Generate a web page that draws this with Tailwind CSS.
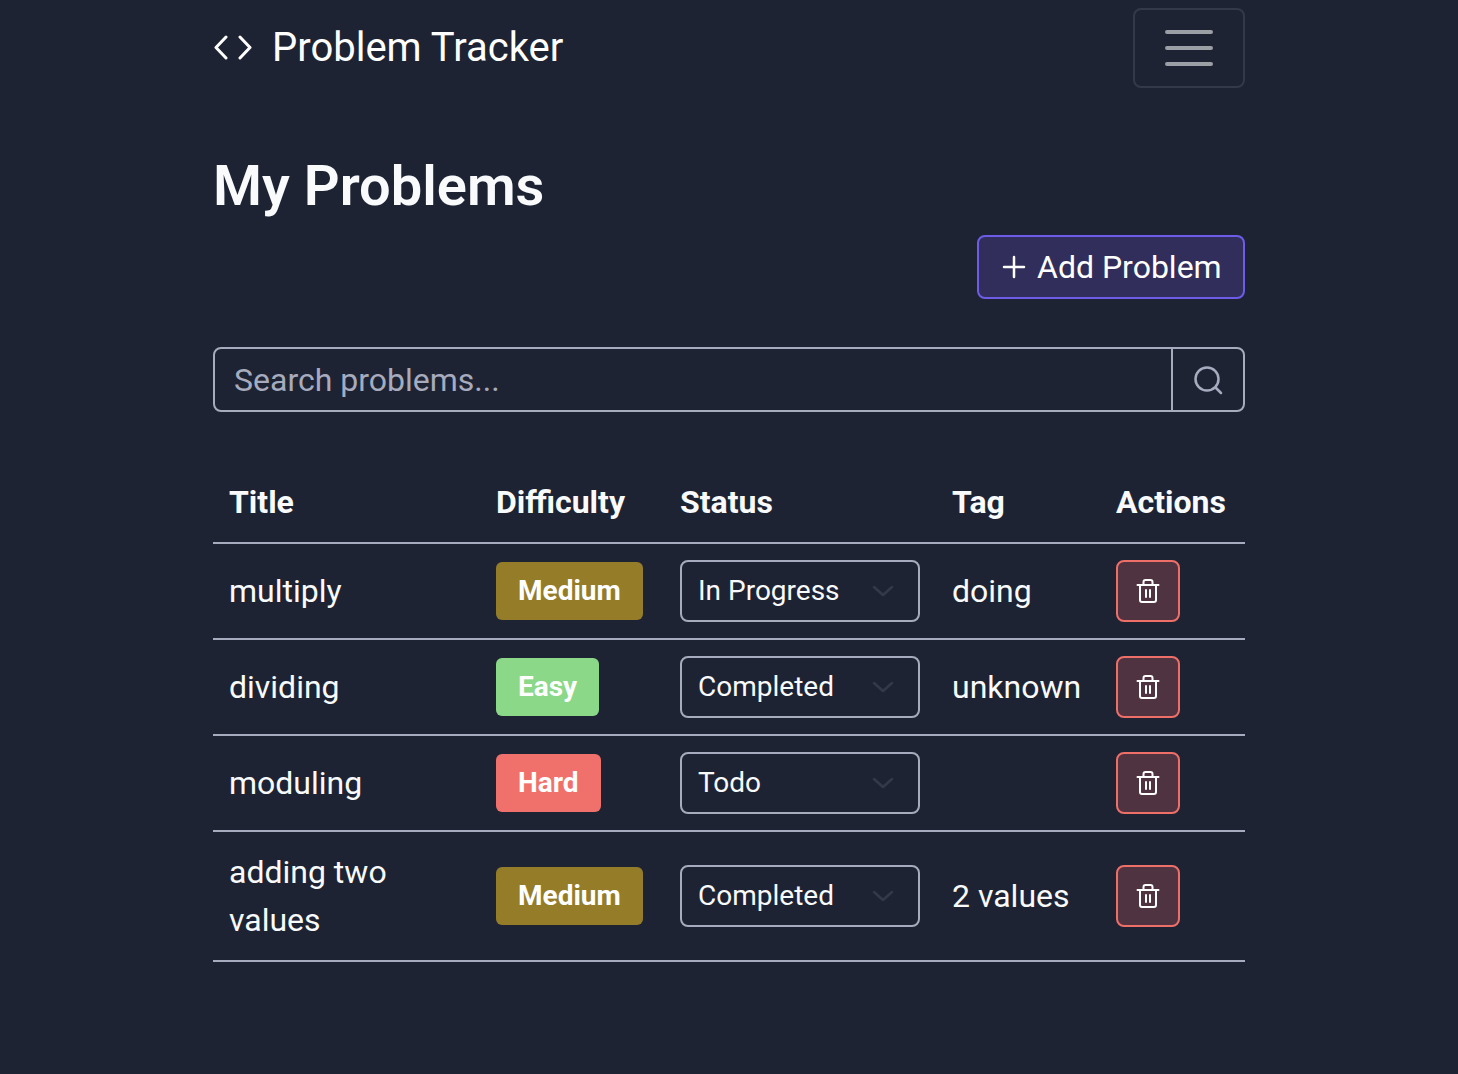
<!DOCTYPE html>
<html lang="en">
<head>
<meta charset="utf-8">
<title>Problem Tracker</title>
<script src="https://cdn.jsdelivr.net/npm/@tailwindcss/browser@4"></script>
</head>
<body class="bg-[#1e2334] text-[#f8fafc] font-['Roboto',sans-serif] min-h-[1074px]">
<div class="w-[1032px] ml-[213px]">
  <nav class="flex items-center justify-between pt-2 h-[88px]">
    <a class="flex items-center gap-[20px] text-[40px] leading-[48px] text-white">
      <svg class="w-[38px] h-[30px] ml-[1px]" viewBox="0 0 38 30" fill="none" stroke="currentColor" stroke-width="3" stroke-linecap="round" stroke-linejoin="round"><path d="M12 4 2 14.500 12 25M26 4l10 10.500L26 25"/></svg>
      <span>Problem Tracker</span>
    </a>
    <button class="w-[112px] h-[80px] border-2 border-[#343949] rounded-lg flex flex-col items-center justify-center gap-3">
      <span class="block w-12 h-1 rounded-full bg-[#9a9ea5]"></span>
      <span class="block w-12 h-1 rounded-full bg-[#9a9ea5]"></span>
      <span class="block w-12 h-1 rounded-full bg-[#9a9ea5]"></span>
    </button>
  </nav>
  <h1 class="mt-[65px] text-[56px] leading-[67px] font-semibold text-[#f8fafc]">My Problems</h1>
  <div class="flex justify-end mt-[15px]">
    <button class="h-16 w-[268px] border-2 border-[#6c5ce7] bg-[#312e5c] rounded-lg flex items-center pl-[23px] gap-[11px] text-[32px] text-white">
      <svg class="w-6 h-6" viewBox="0 0 24 24" fill="none" stroke="currentColor" stroke-width="2.500" stroke-linecap="round"><path d="M12 2v20M2 12h20"/></svg>
      <span>Add Problem</span>
    </button>
  </div>
  <div class="mt-[48px] h-[65px] flex border-2 border-[#a6abbd] rounded-lg">
    <div class="flex-1 flex items-center pl-[19px] text-[32px] text-[#a6abbd]">Search problems...</div>
    <div class="w-[72px] border-l-2 border-[#a6abbd] flex items-center justify-center text-[#a6abbd]">
      <svg class="w-[32px] h-[32px]" viewBox="0 0 32 32" fill="none" stroke="currentColor" stroke-width="2.500" stroke-linecap="round"><circle cx="15" cy="15" r="11.500"/><path d="m24 24 5 5"/></svg>
    </div>
  </div>
  <table class="mt-[50px] w-[1032px] table-fixed border-collapse text-[32px] leading-[48px]">
    <colgroup><col class="w-[267px]"><col class="w-[184px]"><col class="w-[272px]"><col class="w-[164px]"><col class="w-[145px]"></colgroup>
    <thead>
      <tr class="border-b-2 border-[#a6abbd]">
        <th class="p-4 text-left font-bold">Title</th>
        <th class="p-4 text-left font-bold">Difficulty</th>
        <th class="p-4 text-left font-bold">Status</th>
        <th class="p-4 text-left font-bold">Tag</th>
        <th class="p-4 text-left font-bold">Actions</th>
      </tr>
    </thead>
    <tbody>
      <tr class="border-b-2 border-[#a6abbd]">
        <td class="p-4">multiply</td>
        <td class="p-4"><span class="inline-flex items-center h-[58px] px-[22px] rounded-md bg-[#947c29] text-[28px] font-bold text-white">Medium</span></td>
        <td class="p-4"><div class="w-[240px] h-[62px] border-2 border-[#a6abbd] rounded-lg flex items-center justify-between pl-4 pr-[24px] text-[28px]"><span>In Progress</span><svg class="w-[22px] h-[12px]" viewBox="0 0 22 12" fill="none" stroke="#343949" stroke-width="2.500" stroke-linecap="round" stroke-linejoin="round"><path d="m2 2 9 8 9-8"/></svg></div></td>
        <td class="p-4">doing</td>
        <td class="p-4"><button class="w-16 h-[62px] border-2 border-[#ee6e68] bg-[#4f3340] rounded-lg flex items-center justify-center text-white"><svg class="w-6 h-6" viewBox="0 0 24 24" fill="none" stroke="currentColor" stroke-width="2" stroke-linecap="round" stroke-linejoin="round"><path d="M1.500 6h21M4 6v15a2 2 0 0 0 2 2h12a2 2 0 0 0 2-2V6M7.500 6V3a2 2 0 0 1 2-2h5a2 2 0 0 1 2 2v3M10 11v7M14 11v7"/></svg></button></td>
      </tr>
      <tr class="border-b-2 border-[#a6abbd]">
        <td class="p-4">dividing</td>
        <td class="p-4"><span class="inline-flex items-center h-[58px] px-[22px] rounded-md bg-[#8ad888] text-[28px] font-bold text-white">Easy</span></td>
        <td class="p-4"><div class="w-[240px] h-[62px] border-2 border-[#a6abbd] rounded-lg flex items-center justify-between pl-4 pr-[24px] text-[28px]"><span>Completed</span><svg class="w-[22px] h-[12px]" viewBox="0 0 22 12" fill="none" stroke="#343949" stroke-width="2.500" stroke-linecap="round" stroke-linejoin="round"><path d="m2 2 9 8 9-8"/></svg></div></td>
        <td class="p-4">unknown</td>
        <td class="p-4"><button class="w-16 h-[62px] border-2 border-[#ee6e68] bg-[#4f3340] rounded-lg flex items-center justify-center text-white"><svg class="w-6 h-6" viewBox="0 0 24 24" fill="none" stroke="currentColor" stroke-width="2" stroke-linecap="round" stroke-linejoin="round"><path d="M1.500 6h21M4 6v15a2 2 0 0 0 2 2h12a2 2 0 0 0 2-2V6M7.500 6V3a2 2 0 0 1 2-2h5a2 2 0 0 1 2 2v3M10 11v7M14 11v7"/></svg></button></td>
      </tr>
      <tr class="border-b-2 border-[#a6abbd]">
        <td class="p-4">moduling</td>
        <td class="p-4"><span class="inline-flex items-center h-[58px] px-[22px] rounded-md bg-[#f0716b] text-[28px] font-bold text-white">Hard</span></td>
        <td class="p-4"><div class="w-[240px] h-[62px] border-2 border-[#a6abbd] rounded-lg flex items-center justify-between pl-4 pr-[24px] text-[28px]"><span>Todo</span><svg class="w-[22px] h-[12px]" viewBox="0 0 22 12" fill="none" stroke="#343949" stroke-width="2.500" stroke-linecap="round" stroke-linejoin="round"><path d="m2 2 9 8 9-8"/></svg></div></td>
        <td class="p-4"></td>
        <td class="p-4"><button class="w-16 h-[62px] border-2 border-[#ee6e68] bg-[#4f3340] rounded-lg flex items-center justify-center text-white"><svg class="w-6 h-6" viewBox="0 0 24 24" fill="none" stroke="currentColor" stroke-width="2" stroke-linecap="round" stroke-linejoin="round"><path d="M1.500 6h21M4 6v15a2 2 0 0 0 2 2h12a2 2 0 0 0 2-2V6M7.500 6V3a2 2 0 0 1 2-2h5a2 2 0 0 1 2 2v3M10 11v7M14 11v7"/></svg></button></td>
      </tr>
      <tr class="border-b-2 border-[#a6abbd]">
        <td class="p-4">adding two values</td>
        <td class="p-4"><span class="inline-flex items-center h-[58px] px-[22px] rounded-md bg-[#947c29] text-[28px] font-bold text-white">Medium</span></td>
        <td class="p-4"><div class="w-[240px] h-[62px] border-2 border-[#a6abbd] rounded-lg flex items-center justify-between pl-4 pr-[24px] text-[28px]"><span>Completed</span><svg class="w-[22px] h-[12px]" viewBox="0 0 22 12" fill="none" stroke="#343949" stroke-width="2.500" stroke-linecap="round" stroke-linejoin="round"><path d="m2 2 9 8 9-8"/></svg></div></td>
        <td class="p-4">2 values</td>
        <td class="p-4"><button class="w-16 h-[62px] border-2 border-[#ee6e68] bg-[#4f3340] rounded-lg flex items-center justify-center text-white"><svg class="w-6 h-6" viewBox="0 0 24 24" fill="none" stroke="currentColor" stroke-width="2" stroke-linecap="round" stroke-linejoin="round"><path d="M1.500 6h21M4 6v15a2 2 0 0 0 2 2h12a2 2 0 0 0 2-2V6M7.500 6V3a2 2 0 0 1 2-2h5a2 2 0 0 1 2 2v3M10 11v7M14 11v7"/></svg></button></td>
      </tr>
    </tbody>
  </table>
</div>
</body>
</html>
